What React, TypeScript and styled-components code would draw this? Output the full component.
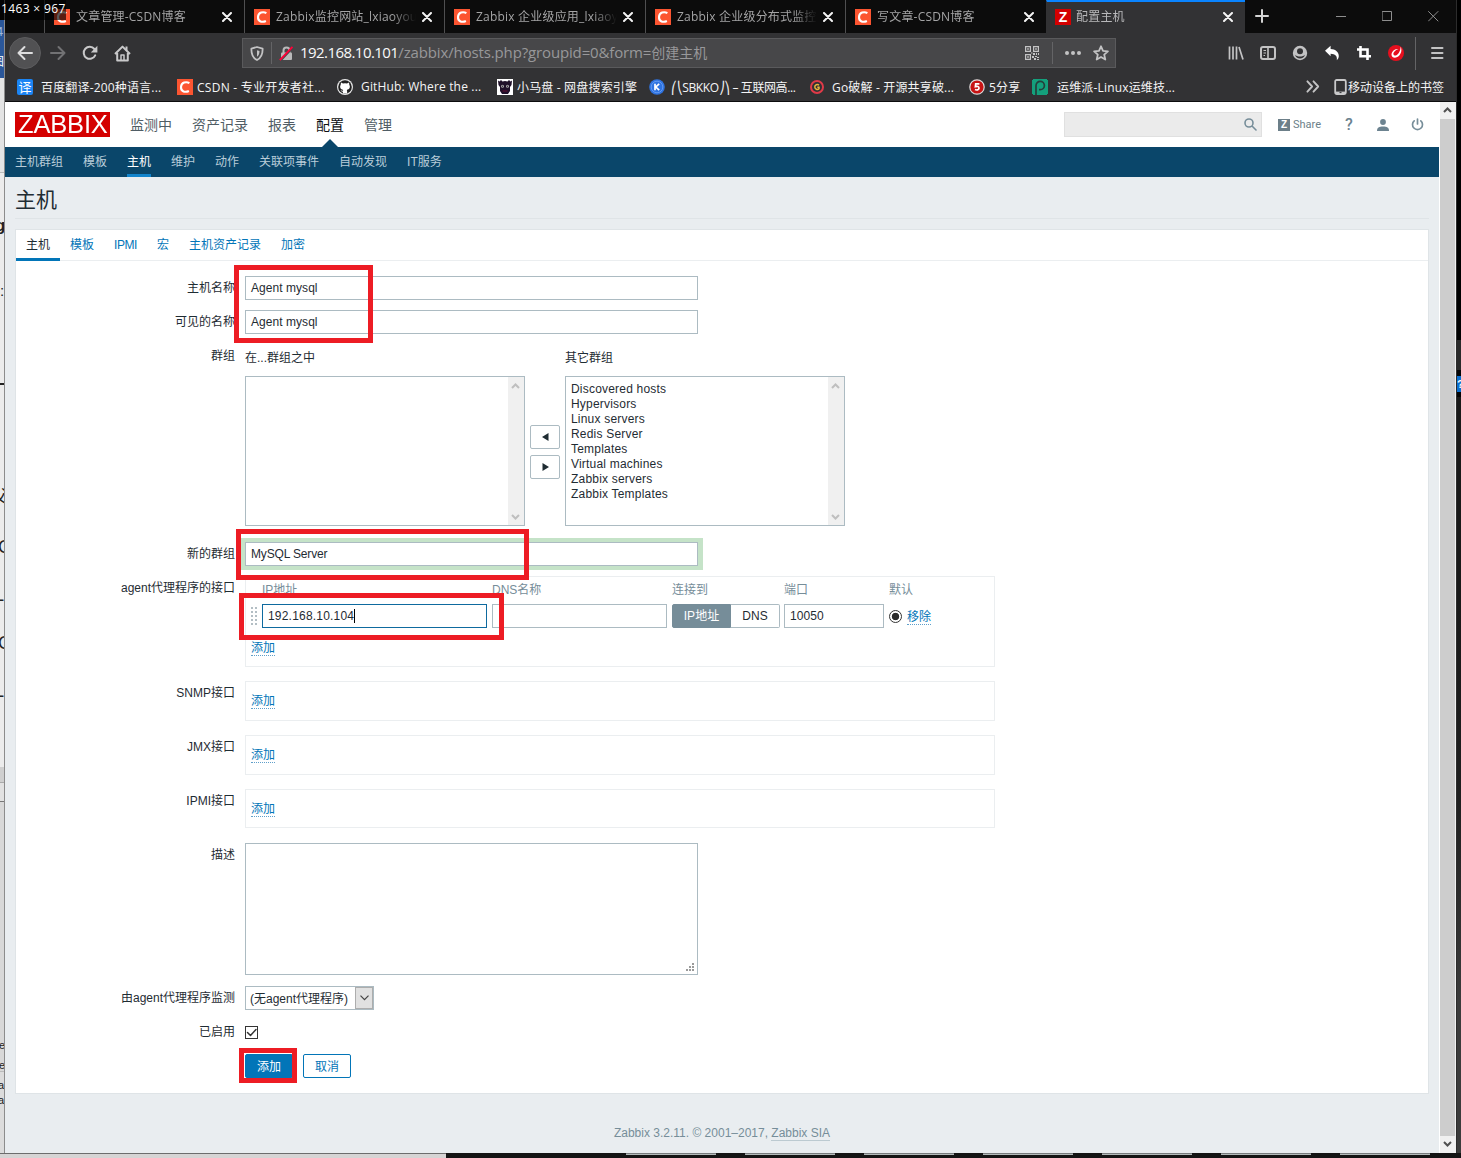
import React from 'react';
import styled, { createGlobalStyle, css } from 'styled-components';

const uiFont = `"Open Sans", "Noto Sans CJK SC", sans-serif`;
const pageFont = `"Liberation Sans", "Noto Sans CJK SC", sans-serif`;

const GlobalStyle = createGlobalStyle`
  * { box-sizing: border-box; }
  body { margin: 0; background: #111; overflow: hidden; }
  button, input, textarea { font: inherit; }
`;

const Desktop = styled.div`
  position: relative;
  width: 1461px;
  height: 1158px;
  display: grid;
  grid-template-columns: 5px 1451px 5px;
  grid-template-rows: 1153px 5px;
  overflow: hidden;
  font-family: ${pageFont};
  font-size: 12px;
  color: #1f2c33;
`;

/* ---------- surroundings of the browser window ---------- */

const LeftEdge = styled.div`
  position: relative;
  overflow: hidden;
  border-right: 1px solid #8c8c8c;
  background: linear-gradient(
    #0c0c0c 0 20px, #2b579a 20px 78px, #e4e4e4 78px 172px, #bbb 172px 173px,
    #ececec 173px 383px, #222 383px 385px, #ececec 385px 767px, #cfcfcf 767px 782px,
    #aaa 782px 783px, #e2e2e2 783px 801px, #777 801px 802px, #d8d8d8 802px 1071px, #bbb 1071px 1072px, #dcdcdc 1072px);
`;
const Fragment = styled.span<{ $y: number; $size: number; $color?: string; $bold?: boolean; $x?: number }>`
  position: absolute;
  left: ${p => p.$x ?? -3}px;
  top: ${p => p.$y}px;
  font-size: ${p => p.$size}px;
  line-height: 1;
  font-weight: ${p => (p.$bold ? 700 : 400)};
  color: ${p => p.$color ?? '#222'};
`;
const RightEdge = styled.div`
  display: flex;
  flex-direction: column;
  overflow: hidden;
  border-left: 1px solid #2c2c2c;
  background: linear-gradient(#000 0 340px, #2a2a2a 340px 370px, #050505 370px 397px, #191919 397px 600px, #1f1f1f 800px, #3b3b3b 1000px);
`;
const HelpBadge = styled.span`
  margin-top: 376px;
  height: 16px;
  flex: none;
  background: #0b6fd0;
  color: #fff;
  font: 700 11px/16px ${pageFont};
`;
const BottomEdge = styled.div`
  grid-column: 1 / -1;
  display: flex;
  background: #141414;
`;
const BottomLight = styled.div`
  width: 446px;
  background: #d6d4d4;
  border-top: 1px solid #6d6d6d;
`;
const Thumbs = styled.div`
  display: flex;
  gap: 29px;
  margin-left: 180px;
`;
const Thumb = styled.i`
  width: 90px;
  height: 2px;
  background: #b5bbbb;
  border-top: 1px solid #777b7d;
`;
const SizeTip = styled.div`
  position: absolute;
  left: 0;
  top: 0;
  width: 66px;
  height: 20px;
  background: rgba(0, 0, 0, 0.65);
  color: #fff;
  font: 12px/18px ${uiFont};
  letter-spacing: 0.35px;
  padding-left: 1px;
  white-space: nowrap;
`;

/* ---------- browser chrome ---------- */

const Window = styled.div`
  display: flex;
  flex-direction: column;
  min-width: 0;
`;
const TabStrip = styled.div`
  display: flex;
  height: 33px;
  padding-left: 39px;
  background: #0c0c0c;
  font-family: ${uiFont};
`;
const Tab = styled.div<{ $active?: boolean; $w: number }>`
  width: ${p => p.$w}px;
  display: flex;
  align-items: center;
  padding: 1px 10px 0 9px;
  border-left: 1px solid #4f4f50;
  color: #a4a4a5;
  ${p => p.$active && css`
    background: #323234;
    border-left-color: #323234;
    border-top: 2px solid #0a84ff;
    padding-top: 0;
    padding-left: 8px;
    padding-bottom: 1px;
    color: #b8b8ba;
  `}
`;
const TabTitle = styled.span<{ $near?: boolean }>`
  flex: 1;
  min-width: 0;
  margin: 0 4px 0 ${p => (p.$near ? 5 : 6)}px;
  font-size: 12px;
  line-height: 18px;
  letter-spacing: 0.2px;
  white-space: nowrap;
  overflow: hidden;
  mask-image: linear-gradient(90deg, #000 calc(100% - 24px), transparent);
`;
const Favicon = styled.i<{ $bg: string }>`
  display: flex;
  flex: none;
  align-items: center;
  justify-content: center;
  width: 16px;
  height: 16px;
  background: ${p => p.$bg};
  color: #fff;
  font: 700 14px/16px ${pageFont};
`;
const Slot = styled.span<{ $w?: number; $h?: number }>`
  width: ${p => p.$w ?? 32}px;
  height: ${p => p.$h ?? 32}px;
  flex: none;
  display: flex;
  align-items: center;
  justify-content: center;
`;
const WindowButtons = styled.div`
  display: flex;
  margin-left: auto;
`;
const Toolbar = styled.div`
  display: flex;
  align-items: center;
  height: 39px;
  padding: 1px 2px 0 4px;
  background: #323234;
  font-family: ${uiFont};
`;
const BackButton = styled.span`
  width: 32px;
  height: 32px;
  margin-right: 1px;
  border-radius: 50%;
  border: 1px solid #5c5c5e;
  background: #515153;
  display: flex;
  align-items: center;
  justify-content: center;
`;
const UrlBar = styled.div`
  display: flex;
  align-items: center;
  width: 874px;
  height: 30px;
  margin: 0 104px;
  border: 1px solid #5a5a5c;
  background: #474749;
  color: #98989a;
  padding-left: 6px;
`;
const UrlText = styled.span`
  flex: 1;
  margin-left: 6px;
  padding-bottom: 2px;
  font-size: 15px;
  line-height: 20px;
  letter-spacing: -0.14px;
  b { font-weight: 400; color: #f9f9fa; letter-spacing: -0.56px; }
  span { font-size: 14px; letter-spacing: 0; }
`;
const Rule = styled.i<{ $h: number; $m?: string }>`
  width: 1px;
  height: ${p => p.$h}px;
  margin: ${p => p.$m ?? '0'};
  background: #646466;
`;
const Bookmarks = styled.div`
  display: flex;
  align-items: center;
  height: 30px;
  padding: 0 0 0 12px;
  background: #323234;
  border-bottom: 1px solid #0c0c0d;
  color: #f5f5f6;
  font-family: ${uiFont};
  font-size: 12px;
`;
const Bookmark = styled.span<{ $w: number; $gap: number; $track?: number }>`
  display: flex;
  align-items: center;
  gap: ${p => p.$gap}px;
  width: ${p => p.$w}px;
  flex: none;
  white-space: nowrap;
  letter-spacing: ${p => p.$track ?? 0.17}px;
`;
const MobileBookmarks = styled.span`
  display: flex;
  align-items: center;
  gap: 1px;
  margin-left: 13px;
  white-space: nowrap;
`;

/* ---------- page frame ---------- */

const Viewport = styled.div`
  flex: 1;
  display: flex;
  background: #fff;
`;
const Page = styled.div`
  width: 1434px;
  display: flex;
  flex-direction: column;
  background: #e9edf0;
`;
const ScrollTrack = styled.div`
  display: flex;
  flex-direction: column;
  width: 16px;
  margin-left: 1px;
  background: #f0f0f0;
`;
const ScrollThumb = styled.i`
  flex: 1;
  width: 15px;
  background: #cdcdcd;
`;
const Header = styled.header`
  display: flex;
  align-items: center;
  height: 45px;
  padding: 0 5px 0 10px;
  background: #fff;
`;
const Logo = styled.div`
  width: 95px;
  height: 25px;
  background: #d40000;
  display: flex;
  align-items: center;
  justify-content: center;
`;
const MainMenu = styled.nav`
  display: flex;
  gap: 20px;
  margin-left: 20px;
  font-size: 14px;
  align-self: stretch;
`;
const MainItem = styled.a<{ $active?: boolean }>`
  position: relative;
  height: 45px;
  line-height: 47px;
  color: ${p => (p.$active ? '#0e1012' : '#505d65')};
  ${p => p.$active && css`
    &::after {
      content: '';
      position: absolute;
      left: 6px;
      bottom: 0;
      border: 8px solid transparent;
      border-top: 0;
      border-bottom: 8px solid #0a466a;
    }
  `}
`;
const SearchBox = styled.div`
  width: 198px;
  height: 25px;
  margin-left: auto;
  padding: 0 4px 1px;
  display: flex;
  align-items: center;
  justify-content: flex-end;
  background: #ebebeb;
  border: 1px solid #e0e0e0;
`;
const Share = styled.a`
  display: flex;
  align-items: center;
  gap: 3px;
  width: 54px;
  margin: 0 0 0 16px;
  color: #6c7f89;
  font: 11px/14px Roboto, ${pageFont};
`;
const ZMark = styled.i`
  display: flex;
  align-items: center;
  justify-content: center;
  width: 12px;
  height: 12px;
  background: #6c7f89;
  color: #fff;
  font: 700 10px/12px ${pageFont};
`;
const HelpLink = styled.a`
  width: 20px;
  text-align: center;
  color: #6c8390;
  font: 500 16px/20px Roboto, ${pageFont};
`;
const SubMenu = styled.nav`
  display: flex;
  gap: 20px;
  height: 30px;
  padding-left: 10px;
  background: #0a466a;
`;
const SubItem = styled.a<{ $active?: boolean }>`
  height: 30px;
  line-height: 31px;
  color: ${p => (p.$active ? '#fff' : '#b9cdd9')};
  border-bottom: 3px solid ${p => (p.$active ? '#1284cc' : 'transparent')};
`;
const PageTitle = styled.h1`
  margin: 0 10px;
  height: 42px;
  border-bottom: 1px solid #dfe4e7;
  font-weight: 400;
  font-size: 21px;
  line-height: 46px;
`;
const Card = styled.section`
  margin: 10px 10px 0;
  height: 865px;
  background: #fff;
  border: 1px solid #dfe4e7;
`;
const CardTabs = styled.div`
  display: flex;
  height: 31px;
  border-bottom: 1px solid #ebeef0;
`;
const CardTab = styled.a<{ $active?: boolean; $tight?: boolean }>`
  height: 31px;
  padding: 0 10px;
  line-height: 31px;
  letter-spacing: ${p => (p.$tight ? -0.45 : 0)}px;
  color: ${p => (p.$active ? '#1f2c33' : '#0275b8')};
  border-bottom: 3px solid ${p => (p.$active ? '#0275b8' : 'transparent')};
`;
const Footer = styled.footer`
  padding-top: 31px;
  text-align: center;
  line-height: 16px;
  color: #768d99;
  a { border-bottom: 1px solid #bccad1; }
`;

/* ---------- form ---------- */

const Row = styled.div<{ $top: number }>`
  display: flex;
  align-items: flex-start;
  margin-top: ${p => p.$top}px;
`;
const Label = styled.label`
  width: 219px;
  margin-right: 10px;
  text-align: right;
  line-height: 25px;
  height: 24px;
`;
const TextField = styled.div<{ $w: number; $glow?: boolean; $focus?: boolean }>`
  width: ${p => p.$w}px;
  height: 24px;
  padding-left: 5px;
  line-height: 22px;
  background: #fff;
  border: 1px solid ${p => (p.$focus ? '#0e6a9f' : '#acbbc2')};
  letter-spacing: ${p => (p.$focus ? 0.2 : 0.05)}px;
  ${p => p.$glow && css`
    box-shadow: 0 0 0 4px #c5e3c8, 1px 0 0 4px #c5e3c8;
    letter-spacing: -0.15px;
  `}
`;
const Caret = styled.i`
  display: inline-block;
  width: 1px;
  height: 14px;
  vertical-align: -3px;
  background: #000;
`;
const ListColumn = styled.div`
  width: 280px;
`;
const ListTitle = styled.div`
  height: 32px;
  line-height: 29px;
`;
const ListBox = styled.div`
  display: flex;
  height: 150px;
  border: 1px solid #acbbc2;
  background: #fff;
`;
const Options = styled.div`
  flex: 1;
  padding: 5px 5px 4px;
  line-height: 15px;
  letter-spacing: 0.2px;
`;
const ListScroll = styled.div`
  width: 16px;
  display: flex;
  flex-direction: column;
  align-items: center;
  justify-content: space-between;
  padding: 6px 1px 5px 0;
  background: #f0f0f0;
`;
const Movers = styled.div`
  display: flex;
  flex-direction: column;
  gap: 6px;
  padding: 81px 5px 0;
`;
const Mover = styled.button`
  width: 30px;
  height: 24px;
  padding: 0;
  display: flex;
  align-items: center;
  justify-content: center;
  background: #fff;
  border: 1px solid #acbbc2;
  border-radius: 2px;
`;
const Panel = styled.div<{ $h: number }>`
  width: 750px;
  height: ${p => p.$h}px;
  padding: ${p => (p.$h > 50 ? 0 : 9)}px 0 0 5px;
  border: 1px solid #ebeef0;
`;
const Link = styled.a`
  display: inline-block;
  height: 18px;
  line-height: 20px;
  color: #0275b8;
  border-bottom: 1px dotted #5f9fca;
`;
const InterfaceGrid = styled.div`
  display: grid;
  grid-template-columns: 11px 230px 180px 112px 105px 18px auto;
  grid-template-rows: 27px 24px;
  align-items: center;
  margin-bottom: 10px;
`;
const Heading = styled.span`
  color: #768d99;
  line-height: 27px;
  white-space: nowrap;
`;
const Grip = styled.i`
  display: grid;
  grid-template-columns: 2px 2px;
  gap: 2px;
  i { width: 2px; height: 2px; background: #b3bec4; }
`;
const Segments = styled.div`
  display: flex;
  width: 108px;
  height: 24px;
`;
const Segment = styled.span<{ $on?: boolean; $w: number }>`
  width: ${p => p.$w}px;
  line-height: 22px;
  text-align: center;
  letter-spacing: 0.1px;
  border: 1px solid ${p => (p.$on ? '#768d99' : '#acbbc2')};
  border-left-width: ${p => (p.$on ? 1 : 0)}px;
  border-radius: ${p => (p.$on ? '2px 0 0 2px' : '0 2px 2px 0')};
  background: ${p => (p.$on ? '#768d99' : '#fff')};
  color: ${p => (p.$on ? '#fff' : '#1f2c33')};
`;
const Radio = styled.i`
  width: 13px;
  height: 13px;
  border: 1px solid #333;
  border-radius: 50%;
  background: radial-gradient(circle, #2b2b2b 0 3.4px, #fff 4.1px);
`;
const Area = styled.div`
  display: flex;
  align-items: flex-end;
  justify-content: flex-end;
  width: 453px;
  height: 132px;
  padding: 2px;
  border: 1px solid #acbbc2;
`;
const Select = styled.div`
  display: flex;
  width: 129px;
  height: 24px;
  border: 1px solid #acbbc2;
  line-height: 24px;
  padding-left: 4px;
`;
const SelectArrow = styled.span`
  display: flex;
  align-items: center;
  justify-content: center;
  width: 18px;
  height: 22px;
  margin-left: auto;
  background: #e1e1e1;
  border: 1px solid #adadad;
`;
const Check = styled.span`
  display: flex;
  width: 13px;
  height: 13px;
  margin-top: 6px;
  border: 1px solid #333;
`;
const Button = styled.button<{ $primary?: boolean }>`
  width: 48px;
  height: 24px;
  margin-right: 10px;
  padding: 2px 0 0;
  line-height: 20px;
  border: 1px solid #0275b8;
  border-radius: 2px;
  background: ${p => (p.$primary ? '#0275b8' : '#fff')};
  color: ${p => (p.$primary ? '#fff' : '#0275b8')};
`;
const Marker = styled.div<{ $x: number; $y: number; $w: number; $h: number }>`
  position: absolute;
  left: ${p => p.$x}px;
  top: ${p => p.$y}px;
  width: ${p => p.$w}px;
  height: ${p => p.$h}px;
  border: 5px solid #ed1c24;
`;

/* ---------- icons ---------- */

type StrokeProps = { d: string; size?: number; w?: number; color?: string; box?: number; fill?: string };
const Stroke = ({ d, size = 16, w = 2, color = '#c3c3c4', box = 16, fill = 'none' }: StrokeProps) => (
  <svg width={size} height={size} viewBox={`0 0 ${box} ${box}`} fill={fill} stroke={color} strokeWidth={w}
    strokeLinecap="round" strokeLinejoin="round"><path d={d} /></svg>
);
const Chevron = ({ up, color = '#505050', size = 9 }: { up?: boolean; color?: string; size?: number }) => (
  <svg width={size} height={size * 0.67} viewBox="0 0 9 6" fill="none" stroke={color} strokeWidth="2">
    <path d={up ? 'M1 5 4.5 1.5 8 5' : 'M1 1 4.5 4.5 8 1'} />
  </svg>
);
const IconSvg = styled.svg`
  flex: none;
`;
const CsdnIcon = () => (
  <IconSvg width="16" height="16" viewBox="0 0 16 16">
    <path fill="#fc5531" d="M0 0h16v16H0z" />
    <path d="M12.4 4.1C9.3 2.3 4.3 3.2 4 8c-.2 4.8 4.3 5.6 7.9 4" fill="none" stroke="#fff" strokeWidth="2.1" />
  </IconSvg>
);
const GithubIcon = () => (
  <IconSvg width="16" height="16" viewBox="0 0 16 16">
    <circle cx="8" cy="8" r="8" fill="#e8e8e8" /><circle cx="8" cy="8" r="6.8" fill="#222" />
    <path fill="#fff" d="M4 3.6 6 4.4a8 8 0 0 1 4 0l2-.8.3 2.2c1.4 2.5.2 4.7-2.5 5.1.4.7.4 1.8.4 3.5H5.9v-1.8c-1.4.2-1.900-.5-2.400-1.500.9.1 1.300.9 2.400.7l.3-.9C3.500 10.400 2.400 8.200 3.700 5.800z" />
  </IconSvg>
);
const PonyIcon = () => (
  <IconSvg width="16" height="16" viewBox="0 0 16 16">
    <path fill="#fff" d="M0 0h16v16H0z" />
    <path fill="#20112a" d="M1 1.500l1.500 1L4 1l1.500 1.500L8 2l2.500.5L12 1l1.500 1.500 1.500-1-.5 4.500-1.500 2v4l-2 3H5l-2-3V8L1.500 6z" />
    <circle cx="5.500" cy="7.200" r="1.500" fill="#aaa" /><circle cx="10.500" cy="7.200" r="1.500" fill="#aaa" />
    <path fill="#20112a" d="M5 6.800h1v1H5zM10 6.800h1v1h-1z" />
    <path stroke="#613" d="M5.500 12h5" />
  </IconSvg>
);
const KIcon = () => (
  <IconSvg width="16" height="16" viewBox="0 0 16 16">
    <circle cx="8" cy="8" r="7.800" fill="#2f73e0" />
    <circle cx="8" cy="8" r="5.800" fill="none" stroke="#5f98f2" />
    <path d="M6 4.800v6.400M10.200 4.800 6.800 8l3.400 3.200" fill="none" stroke="#fff" strokeWidth="1.700" />
  </IconSvg>
);
const GoIcon = () => (
  <IconSvg width="16" height="16" viewBox="0 0 16 16" fill="none">
    <circle cx="8" cy="8" r="6" stroke="#e03a48" strokeWidth="2" />
    <path d="M10 6.200C8.500 4.800 5.700 5.800 5.800 8s2.700 3.200 4.200 1.800V8.200H8.300" stroke="#e8b63c" strokeWidth="1.500" />
  </IconSvg>
);
const FiveIcon = () => (
  <IconSvg width="16" height="16" viewBox="0 0 16 16">
    <circle cx="8" cy="8" r="7.200" fill="#c81414" stroke="#ddd" strokeWidth="1.200" />
    <path d="M10.400 4.800H6.700l-.3 2.800c2-.7 3.700-.2 3.600 1.500-.1 1.900-2.400 2.300-4 1.500" fill="none" stroke="#fff" strokeWidth="1.700" />
  </IconSvg>
);
const PaiIcon = () => (
  <IconSvg width="16" height="16" viewBox="0 0 16 16" fill="none">
    <path fill="#14a07c" d="M1 0h14v1h1v14h-1v1H1v-1H0V1h1z" />
    <path d="M4 16V6.500a4.200 4.200 0 1 1 4.200 4.200H7" stroke="#25403c" strokeWidth="1.700" />
  </IconSvg>
);
const TranslateIcon = styled(Favicon)`
  border-radius: 2px;
  font: 13px/16px ${uiFont};
  letter-spacing: 0;
`;
const QrIcon = () => (
  <svg width="14" height="14" viewBox="0 0 14 14" fill="#c3c3c4">
    <path fillRule="evenodd" d="M0 0h6v6H0zM1.200 1.200v3.600h3.600V1.200zM8 0h6v6H8zM9.200 1.200v3.600h3.600V1.200zM0 8h6v6H0zM1.200 9.200v3.600h3.600V9.200z" />
    <path d="M2.200 2.200h1.600v1.600H2.200zM10.200 2.200h1.600v1.600h-1.600zM2.200 10.200h1.600v1.600H2.200zM8 7h2v2H8zM11 7h1v2h-1zM13 7h1v2h-1zM7 10h2v2H7zM10 10h2v1h-2zM12 11h2v1h-2zM9 12h2v2H9zM12 13h2v1h-2zM6 6.500h1.500v1H6z" />
  </svg>
);
const LibraryIcon = () => (
  <svg width="16" height="16" viewBox="0 0 16 16" fill="none" stroke="#c3c3c4" strokeWidth="1.700">
    <path d="M1.500 1.500v13M5 1.500v13M8.500 1.500v13M11 2l4 12.500" />
  </svg>
);
const SidebarIcon = () => (
  <svg width="16" height="16" viewBox="0 0 16 16" fill="none" stroke="#c3c3c4">
    <rect x="1" y="2" width="14" height="12" rx="2" strokeWidth="2" />
    <path d="M8 2v12" strokeWidth="1.600" /><path d="M3.500 5.500h2.500M3.500 8h2.500M3.500 10.500h1.500" />
  </svg>
);
const AccountIcon = () => (
  <svg width="16" height="16" viewBox="0 0 16 16">
    <circle cx="8" cy="8" r="7.200" fill="#c3c3c4" />
    <circle cx="8" cy="6.300" r="3" fill="#323234" />
    <path d="M2.900 9.800c1.200 4.900 9 4.900 10.200 0-1.800 2.400-8.400 2.400-10.200 0z" fill="#323234" />
  </svg>
);
const UndoIcon = () => (
  <svg width="16" height="16" viewBox="0 0 16 16" fill="#fff">
    <path d="M1 5.800 6.600.8v3.300c5 .1 8.400 3.200 8.200 7.200-.1 1.500-.8 3-2 3.900.7-4.200-1.700-6.400-6.200-6.500v2.600z" />
  </svg>
);
const CropIcon = () => (
  <svg width="16" height="16" viewBox="0 0 16 16" fill="none" stroke="#fff" strokeWidth="2.600">
    <path d="M4.500 1v10.200H15M1 4.500h10.500V15" />
  </svg>
);
const SwirlIcon = () => (
  <svg width="16" height="16" viewBox="0 0 16 16">
    <circle cx="8" cy="8" r="8" fill="#e60f1e" />
    <path d="M12.400 1.800C15.200 5.800 11.800 12.400 7 12.700c-4 .1-4.800-4.300-1.200-7.400C7.300 4.100 9 3.700 10.400 4 7.300 5 4.900 7.700 5.500 9.600c.7 1.900 3.700.6 5.300-1.700 1.400-2 1.900-4.100 1.600-6.100z" fill="#fff" />
  </svg>
);
const ShieldIcon = () => (
  <svg width="14" height="15" viewBox="0 0 14 15" fill="none" stroke="#c3c3c4" strokeWidth="1.800" strokeLinejoin="round">
    <path d="M7 1 12.600 2.600c.2 5.200-1 9-5.600 11.400C2.400 11.600 1.200 7.800 1.400 2.600z" />
    <path d="M7 4.200v6.600c1.800-1.300 2.400-3.200 2.500-5.900z" fill="#c3c3c4" stroke="none" />
  </svg>
);
const LockIcon = () => (
  <svg width="15" height="15" viewBox="0 0 15 15">
    <path d="M4.500 7V4.500a3 3 0 0 1 6 0V7" fill="none" stroke="#b9b9ba" strokeWidth="2" />
    <rect x="2" y="6.500" width="11" height="7.500" rx="1" fill="#b9b9ba" />
    <path d="M1.300 15.200 14.300 1.500" stroke="#474749" strokeWidth="1.600" /><path d="M.8 14.200 13.500.8" stroke="#ff0039" strokeWidth="1.900" />
  </svg>
);
const HomeIcon = () => (
  <svg width="17" height="17" viewBox="0 0 17 17" fill="none" stroke="#c9c9ca" strokeWidth="2" strokeLinejoin="round">
    <path d="M1 9 8.500 1.600 16 9M3.200 8v7.600h10.600V8" /><path d="M12.500 1.500v4" />
    <path d="M7 15.500V10h3v5.500" strokeWidth="1.500" />
  </svg>
);
const ReloadIcon = () => (
  <svg width="16" height="16" viewBox="0 0 16 16">
    <path d="M13.200 10.300A6 6 0 1 1 12.400 4" fill="none" stroke="#c9c9ca" strokeWidth="2" strokeLinecap="round" />
    <path d="M15.400.8v6.600H8.800z" fill="#c9c9ca" />
  </svg>
);
const PhoneIcon = () => (
  <svg width="13" height="16" viewBox="0 0 13 16" fill="none">
    <rect x="1.200" y="1" width="10.600" height="14" rx="1.500" stroke="#c9c9ca" strokeWidth="1.800" />
    <path d="M2 13.400h9" stroke="#c9c9ca" strokeWidth="1.600" /><path d="M5.500 13.600h2" stroke="#323234" />
  </svg>
);
const UserIcon = () => (
  <svg width="12" height="12" viewBox="0 0 12 12" fill="#6c8390">
    <circle cx="6" cy="3" r="2.900" /><path d="M0 12c0-3.600 2-4.600 6-4.600s6 1 6 4.600z" />
  </svg>
);
const ResizeIcon = () => (
  <svg width="9" height="9" viewBox="0 0 9 9" fill="#9a9a9a">
    <path d="M6 0h2v2H6zM3 3h2v2H3zM6 3h2v2H6zM0 6h2v2H0zM3 6h2v2H3zM6 6h2v2H6z" />
  </svg>
);
const LogoText = styled.span`
  color: #fff;
  font: 25px/25px "Liberation Sans", sans-serif;
  letter-spacing: -0.2px;
  transform: scaleX(1.02);
`;

/* ---------- data ---------- */

const tabs = [
  { title: '文章管理-CSDN博客', w: 200 },
  { title: 'Zabbix监控网站_lxiaoyouyou', w: 200 },
  { title: 'Zabbix 企业级应用_lxiaoyouyou', w: 201 },
  { title: 'Zabbix 企业级分布式监控_lxiao', w: 200 },
  { title: '写文章-CSDN博客', w: 201 },
];
const bookmarks = [
  { icon: <TranslateIcon $bg="#1b85f5">译</TranslateIcon>, text: '百度翻译-200种语言...', w: 160, gap: 8 },
  { icon: <CsdnIcon />, text: 'CSDN - 专业开发者社...', w: 160, gap: 4, track: 0.26 },
  { icon: <GithubIcon />, text: 'GitHub: Where the ...', w: 160, gap: 8 },
  { icon: <PonyIcon />, text: '小马盘 - 网盘搜索引擎', w: 152, gap: 4 },
  { icon: <KIcon />, text: '⎛⎝SBKKO⎠⎞ – 互联网高...', w: 160, gap: 6, track: -0.4 },
  { icon: <GoIcon />, text: 'Go破解 - 开源共享破...', w: 160, gap: 7 },
  { icon: <FiveIcon />, text: '5分享', w: 63, gap: 4 },
  { icon: <PaiIcon />, text: '运维派-Linux运维技...', w: 274, gap: 9 },
];
const groups = ['Discovered hosts', 'Hypervisors', 'Linux servers', 'Redis Server', 'Templates',
  'Virtual machines', 'Zabbix servers', 'Zabbix Templates'];

const GroupList = ({ title, items }: { title: string; items: string[] }) => (
  <ListColumn>
    <ListTitle>{title}</ListTitle>
    <ListBox>
      <Options>{items.map(i => <div key={i}>{i}</div>)}</Options>
      <ListScroll><Chevron up color="#bfbfbf" /><Chevron color="#bfbfbf" /></ListScroll>
    </ListBox>
  </ListColumn>
);

const CloseX = () => <Stroke d="M1 1 9 9M9 1 1 9" size={10} box={10} color="#f4f4f4" />;

export default function App() {
  return (
    <>
      <GlobalStyle />
      <Desktop>
        <LeftEdge>
          <Fragment $y={25} $size={13} $color="#9fb8dd" $x={-4}>4</Fragment>
          <Fragment $y={56} $size={12} $color="#fff" $x={-8}>图</Fragment>
          <Fragment $y={217} $size={17} $bold $x={-5}>g</Fragment>
          <Fragment $y={283} $size={15} $x={0}>:</Fragment>
          <Fragment $y={488} $size={18} $x={-9}>父</Fragment>
          <Fragment $y={538} $size={18} $x={-2}>C</Fragment>
          <Fragment $y={586} $size={18} $x={-6}>L</Fragment>
          <Fragment $y={634} $size={18} $x={-2}>C</Fragment>
          <Fragment $y={682} $size={18} $x={-6}>L</Fragment>
          <Fragment $y={1040} $size={11} $x={-1}>e</Fragment>
          <Fragment $y={1060} $size={11} $x={-1}>e</Fragment>
          <Fragment $y={1080} $size={11} $x={-2}>a</Fragment>
          <Fragment $y={1095} $size={11} $x={-2}>a</Fragment>
        </LeftEdge>

        <Window>
          <TabStrip>
            {tabs.map(t => (
              <Tab key={t.title} $w={t.w}>
                <CsdnIcon /><TabTitle>{t.title}</TabTitle><Slot $w={14}><CloseX /></Slot>
              </Tab>
            ))}
            <Tab $active $w={199}>
              <Favicon $bg="#d40000">Z</Favicon><TabTitle $near>配置主机</TabTitle><Slot $w={14}><CloseX /></Slot>
            </Tab>
            <Slot $w={34}><Stroke d="M7 1v12M1 7h12" size={14} box={14} color="#d4d4d4" /></Slot>
            <WindowButtons>
              <Slot $w={46}><Stroke d="M0 5.500h10" size={10} box={10} w={1} color="#8e8e8e" /></Slot>
              <Slot $w={46}><Stroke d="M.5.5h9v9h-9z" size={10} box={10} w={1} color="#8e8e8e" /></Slot>
              <Slot $w={46}><Stroke d="M.5.5l9.500 9.500M10 .5.5 10" size={11} box={11} w={1} color="#8e8e8e" /></Slot>
            </WindowButtons>
          </TabStrip>

          <Toolbar>
            <BackButton><Stroke d="M15 8H1.500M7.500 2 1.500 8l6 6" size={16} color="#dededf" /></BackButton>
            <Slot><Stroke d="M1 8h13.500M8.500 2l6 6-6 6" color="#727274" /></Slot>
            <Slot><ReloadIcon /></Slot>
            <Slot><HomeIcon /></Slot>
            <UrlBar>
              <Slot $w={16}><ShieldIcon /></Slot>
              <Rule $h={22} $m="0 6px" />
              <Slot $w={16}><LockIcon /></Slot>
              <UrlText><b>192.168.10.101</b>/zabbix/hosts.php?groupid=0&amp;form=<span>创建主机</span></UrlText>
              <Slot $w={28}><QrIcon /></Slot>
              <Rule $h={22} $m="0 6px" />
              <Slot $w={28}>
                <svg width="16" height="4" viewBox="0 0 16 4" fill="#c3c3c4"><circle cx="2" cy="2" r="2" /><circle cx="8" cy="2" r="2" /><circle cx="14" cy="2" r="2" /></svg>
              </Slot>
              <Slot $w={28}>
                <Stroke d="M8 1.300l2 4.500 4.900.5-3.700 3.300 1.100 4.900L8 12l-4.300 2.500 1.100-4.900L1.100 6.300 6 5.800z" w={1.800} />
              </Slot>
            </UrlBar>
            <Slot><LibraryIcon /></Slot>
            <Slot><SidebarIcon /></Slot>
            <Slot><AccountIcon /></Slot>
            <Slot><UndoIcon /></Slot>
            <Slot><CropIcon /></Slot>
            <Slot><SwirlIcon /></Slot>
            <Rule $h={33} $m="0 6px 0 3px" />
            <Slot><Stroke d="M2 3h10.500M2 8h10.500M2 13h10.500" /></Slot>
          </Toolbar>

          <Bookmarks>
            {bookmarks.map(b => (
              <Bookmark key={b.text} $w={b.w} $gap={b.gap} $track={b.track}>{b.icon}<span>{b.text}</span></Bookmark>
            ))}
            <Stroke d="M1.500 2.500 6.500 8l-5 5.500M8 2.500 13 8l-5 5.500" w={2} size={15} />
            <MobileBookmarks><PhoneIcon />移动设备上的书签</MobileBookmarks>
          </Bookmarks>

          <Viewport>
            <Page>
              <Header>
                <Logo><LogoText>ZABBIX</LogoText></Logo>
                <MainMenu>
                  <MainItem>监测中</MainItem><MainItem>资产记录</MainItem><MainItem>报表</MainItem>
                  <MainItem $active>配置</MainItem><MainItem>管理</MainItem>
                </MainMenu>
                <SearchBox>
                  <Stroke d="M9 5a4 4 0 1 1-8 0 4 4 0 0 1 8 0M8 8l4 4" size={13} box={13} w={1.600} color="#768d99" />
                </SearchBox>
                <Share><ZMark>Z</ZMark>Share</Share>
                <Slot $w={34}><HelpLink>?</HelpLink></Slot>
                <Slot $w={34}><UserIcon /></Slot>
                <Slot $w={34}><Stroke d="M6.500 1v5M3.200 2.800a5 5 0 1 0 6.600 0" size={13} box={13} w={1.700} color="#768d99" /></Slot>
              </Header>
              <SubMenu>
                <SubItem>主机群组</SubItem><SubItem>模板</SubItem><SubItem $active>主机</SubItem><SubItem>维护</SubItem>
                <SubItem>动作</SubItem><SubItem>关联项事件</SubItem><SubItem>自动发现</SubItem><SubItem>IT服务</SubItem>
              </SubMenu>
              <PageTitle>主机</PageTitle>

              <Card>
                <CardTabs>
                  <CardTab $active>主机</CardTab><CardTab>模板</CardTab><CardTab $tight>IPMI</CardTab><CardTab>宏</CardTab>
                  <CardTab>主机资产记录</CardTab><CardTab>加密</CardTab>
                </CardTabs>
                <Row $top={15}><Label>主机名称</Label><TextField $w={453}>Agent mysql</TextField></Row>
                <Row $top={10}><Label>可见的名称</Label><TextField $w={453}>Agent mysql</TextField></Row>
                <Row $top={10}>
                  <Label>群组</Label>
                  <GroupList title="在...群组之中" items={[]} />
                  <Movers>
                    <Mover><svg width="7" height="8" viewBox="0 0 7 8" fill="#1f2c33"><path d="M6.500 0v8L0 4z" /></svg></Mover>
                    <Mover><svg width="7" height="8" viewBox="0 0 7 8" fill="#1f2c33"><path d="M.5 0v8L7 4z" /></svg></Mover>
                  </Movers>
                  <GroupList title="其它群组" items={groups} />
                </Row>
                <Row $top={16}><Label>新的群组</Label><TextField $w={453} $glow>MySQL Server</TextField></Row>
                <Row $top={10}>
                  <Label>agent代理程序的接口</Label>
                  <Panel $h={91}>
                    <InterfaceGrid>
                      <span /><Heading>IP地址</Heading><Heading>DNS名称</Heading><Heading>连接到</Heading>
                      <Heading>端口</Heading><Heading>默认</Heading><span />
                      <Grip>{Array.from({ length: 10 }, (_, i) => <i key={i} />)}</Grip>
                      <TextField $w={225} $focus>192.168.10.104<Caret /></TextField>
                      <TextField $w={175} />
                      <Segments><Segment $on $w={59}>IP地址</Segment><Segment $w={49}>DNS</Segment></Segments>
                      <TextField $w={100}>10050</TextField>
                      <Radio />
                      <span><Link>移除</Link></span>
                    </InterfaceGrid>
                    <Link>添加</Link>
                  </Panel>
                </Row>
                <Row $top={14}><Label>SNMP接口</Label><Panel $h={40}><Link>添加</Link></Panel></Row>
                <Row $top={14}><Label>JMX接口</Label><Panel $h={40}><Link>添加</Link></Panel></Row>
                <Row $top={14}><Label>IPMI接口</Label><Panel $h={39}><Link>添加</Link></Panel></Row>
                <Row $top={15}><Label>描述</Label><Area><ResizeIcon /></Area></Row>
                <Row $top={11}>
                  <Label>由agent代理程序监测</Label>
                  <Select>(无agent代理程序)<SelectArrow>
                    <svg width="9" height="6" viewBox="0 0 9 6" fill="none" stroke="#444" strokeWidth="1.200"><path d="M.5.7l4 4 4-4" /></svg>
                  </SelectArrow></Select>
                </Row>
                <Row $top={10}>
                  <Label>已启用</Label>
                  <Check><Stroke d="M1.500 5.500 4.500 8.500 10 2.500" size={11} box={11} w={1.500} color="#333" /></Check>
                </Row>
                <Row $top={10}><Label /><Button $primary>添加</Button><Button>取消</Button></Row>
              </Card>
              <Footer>Zabbix 3.2.11. © 2001–2017, <a>Zabbix SIA</a></Footer>
            </Page>
            <ScrollTrack>
              <Slot $w={15} $h={17}><Chevron up /></Slot>
              <ScrollThumb />
              <Slot $w={15} $h={17}><Chevron /></Slot>
            </ScrollTrack>
          </Viewport>
        </Window>

        <RightEdge><HelpBadge>?</HelpBadge></RightEdge>
        <BottomEdge>
          <BottomLight />
          <Thumbs>{Array.from({ length: 7 }, (_, i) => <Thumb key={i} />)}</Thumbs>
        </BottomEdge>

        <SizeTip>1463 × 967</SizeTip>
        <Marker $x={234} $y={265} $w={139} $h={78} />
        <Marker $x={236} $y={529} $w={293} $h={51} />
        <Marker $x={239} $y={593} $w={265} $h={47} />
        <Marker $x={239} $y={1048} $w={58} $h={35} />
      </Desktop>
    </>
  );
}
